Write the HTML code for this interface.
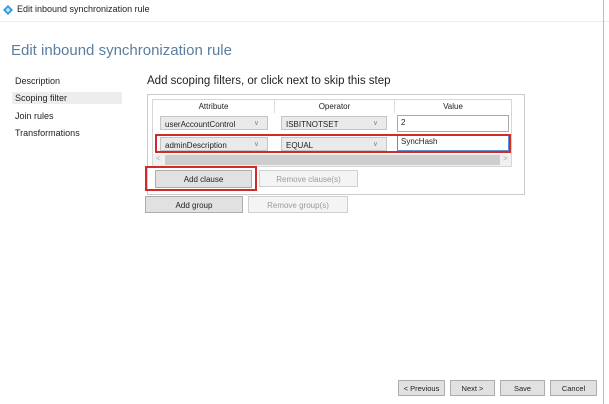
<!DOCTYPE html><html><head><style>
body{margin:0;width:609px;height:404px;background:#fff;position:relative;overflow:hidden;font-family:"Liberation Sans",sans-serif;color:#222}
div{position:absolute;box-sizing:border-box}
.t{font-size:9px;white-space:nowrap}
.btn{background:#e1e1e1;border:1px solid #adadad;font-size:8px;text-align:center;color:#222}
.dis{background:#f4f4f4;border:1px solid #d0d0d0;color:#9a9a9a}
.sel{background:#eaeaea;border:1px solid #c4c4c4;font-size:8px;padding:3px 0 0 4px}
.sel:after{content:"\2228";position:absolute;right:8px;top:2px;font-size:7px;color:#888}
</style></head><body>
<div style="left:0;top:0;width:609px;height:22px;background:#fff;border-bottom:1px solid #eee"></div>
<svg style="position:absolute;left:3px;top:5px" width="10" height="10"><path d="M5 0L10 5L5 10L0 5Z" fill="#2b9ae0"/><path d="M5 2.5L7.5 5L5 7.5L2.5 5Z" fill="#bfe3fa"/></svg>
<div class="t" style="left:17px;top:4px;font-size:9px">Edit inbound synchronization rule</div>
<div style="left:11px;top:42px;font-size:15px;color:#5b7d9e;white-space:nowrap">Edit inbound synchronization rule</div>
<div style="left:12px;top:92px;width:110px;height:12px;background:#ededed"></div>
<div class="t" style="left:15px;top:76px">Description</div>
<div class="t" style="left:15px;top:93px">Scoping filter</div>
<div class="t" style="left:15px;top:111px">Join rules</div>
<div class="t" style="left:15px;top:128px">Transformations</div>
<div style="left:147px;top:75px;font-size:11.5px;white-space:nowrap">Add scoping filters, or click next to skip this step</div>
<div style="left:147px;top:94px;width:378px;height:101px;border:1px solid #ccc"></div>
<div style="left:152px;top:99px;width:360px;height:68px;border:1px solid #d6d6d6;background:#fff"></div>
<div class="t" style="left:153px;top:100px;width:122px;height:13px;border-right:1px solid #ddd;text-align:center;font-size:8px;padding-top:2px">Attribute</div>
<div class="t" style="left:275px;top:100px;width:120px;height:13px;border-right:1px solid #ddd;text-align:center;font-size:8px;padding-top:2px">Operator</div>
<div class="t" style="left:395px;top:100px;width:116px;height:13px;text-align:center;font-size:8px;padding-top:2px">Value</div>
<div class="sel" style="left:160px;top:116px;width:108px;height:14px">userAccountControl</div>
<div class="sel" style="left:281px;top:116px;width:106px;height:14px">ISBITNOTSET</div>
<div style="left:397px;top:115px;width:112px;height:17px;border:1px solid #aaa;font-size:8px;padding:2px 3px">2</div>
<div class="sel" style="left:160px;top:137px;width:108px;height:14px">adminDescription</div>
<div class="sel" style="left:281px;top:137px;width:106px;height:14px">EQUAL</div>
<div style="left:397px;top:135px;width:112px;height:16px;border:1px solid #5b8fd0;font-size:8px;padding:1px 3px">SyncHash</div>
<div style="left:155px;top:134px;width:356px;height:19px;border:2px solid #d02a2a"></div>
<div style="left:153px;top:154px;width:358px;height:12px;background:#f0f0f0"></div>
<div style="left:165px;top:155px;width:335px;height:10px;background:#cdcdcd"></div>
<div class="t" style="left:156px;top:154px;font-size:8px;color:#aaa">&lt;</div>
<div class="t" style="left:503px;top:154px;font-size:8px;color:#aaa">&gt;</div>
<div class="btn" style="left:155px;top:170px;width:97px;height:18px;padding-top:4px">Add clause</div>
<div style="left:145px;top:166px;width:112px;height:25px;border:2px solid #d02a2a"></div>
<div class="btn dis" style="left:259px;top:170px;width:99px;height:17px;padding-top:4px">Remove clause(s)</div>
<div class="btn" style="left:145px;top:196px;width:98px;height:17px;padding-top:4px">Add group</div>
<div class="btn dis" style="left:248px;top:196px;width:100px;height:17px;padding-top:4px">Remove group(s)</div>
<div class="btn" style="left:398px;top:380px;width:47px;height:16px;padding-top:3px;font-size:7.5px">&lt; Previous</div>
<div class="btn" style="left:450px;top:380px;width:45px;height:16px;padding-top:3px;font-size:7.5px">Next &gt;</div>
<div class="btn" style="left:500px;top:380px;width:45px;height:16px;padding-top:3px;font-size:7.5px">Save</div>
<div class="btn" style="left:550px;top:380px;width:47px;height:16px;padding-top:3px;font-size:7.5px">Cancel</div>
<div style="left:603px;top:0;width:1px;height:404px;background:#9cc3e6"></div>
</body></html>
